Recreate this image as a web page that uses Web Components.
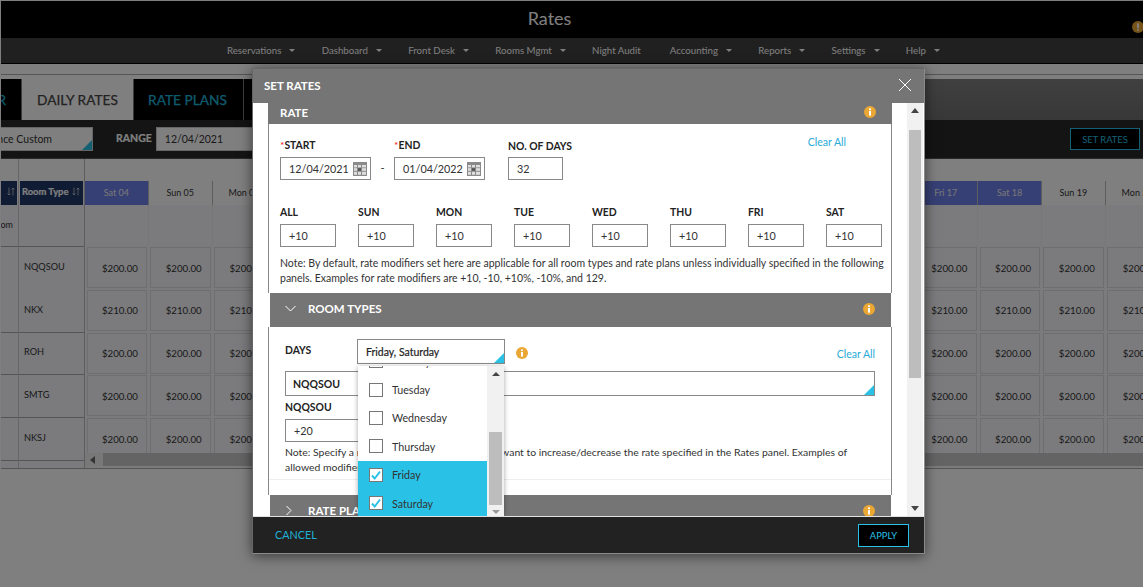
<!DOCTYPE html>
<html><head><meta charset="utf-8">
<style>
html,body{margin:0;padding:0;height:100%;overflow:hidden;background:#fff;font-family:Lato,"Open Sans",sans-serif}
</style></head><body>
<rates-page>
  <app-header slot="top">Rates</app-header>
  <main-nav slot="top"></main-nav>
  <rate-tabs slot="top"></rate-tabs>
  <rate-toolbar slot="top"></rate-toolbar>
  <rate-grid slot="top"></rate-grid>
  <set-rates-modal slot="modal">
    <panel-head>RATE</panel-head>
    <rate-panel></rate-panel>
    <panel-head chevron="down" tall>ROOM TYPES</panel-head>
    <room-panel></room-panel>
    <panel-head chevron="right" tall>RATE PLANS</panel-head>
  </set-rates-modal>
</rates-page>
<script>
const def=(name,html,init)=>customElements.define(name,class extends HTMLElement{
  constructor(){super();const r=this.attachShadow({mode:'open'});r.innerHTML=typeof html==='function'?html(this):html;}
  connectedCallback(){ if(init) init(this); }
});
const FONT='font-family:Lato,"Open Sans",sans-serif;';

def('info-icon',`<style>:host{display:inline-flex;width:12px;height:12px}svg{display:block}</style>
<svg width="12" height="12" viewBox="0 0 12 12"><circle cx="6" cy="6" r="6" fill="#eaa733"/><rect x="5" y="5" width="2" height="4.6" fill="#fff"/><rect x="5" y="2.4" width="2" height="1.7" fill="#fff"/></svg>`);

def('cal-icon',`<style>:host{display:inline-flex;width:14px;height:14px}svg{display:block}</style>
<svg width="14" height="14" viewBox="0 0 14 14"><rect width="14" height="14" fill="#8a8a8a"/><g fill="#dedede"><rect x="1" y="3" width="3" height="2.4"/><rect x="5" y="3" width="3" height="2.4"/><rect x="9" y="3" width="4" height="2.4"/><rect x="1" y="6.2" width="3" height="2.6"/><rect x="9" y="6.2" width="4" height="2.6"/><rect x="1" y="9.8" width="3" height="3"/><rect x="5" y="9.8" width="3" height="3"/><rect x="9" y="9.8" width="4" height="3"/></g><rect x="5" y="6.2" width="3" height="2.6" fill="#555"/></svg>`);

def('rates-page',`<style>
:host{display:block;position:relative;width:1143px;height:587px;overflow:hidden;background:#fff;${FONT}}
.page{padding:1px 0 0 1px;height:586px;box-sizing:border-box;overflow:hidden;background:#fff}
.dim{position:absolute;inset:0;background:rgba(0,0,0,.5)}
</style><div class="page"><slot name="top"></slot></div><div class="dim"></div><slot name="modal"></slot>`);

def('app-header',`<style>
:host{display:flex;position:relative;height:37px;background:#000;color:#fff;align-items:center;justify-content:center;padding:0 45px 3px 0;box-sizing:border-box;font-size:18px}
.w{position:absolute;right:-1px;top:20px;transform:rotate(180deg)}
</style><slot></slot><info-icon class="w"></info-icon>`);

def('main-nav',h=>{
 const items=[['Reservations',1],['Dashboard',1],['Front Desk',1],['Rooms Mgmt',1],['Night Audit',0],['Accounting',1],['Reports',1],['Settings',1],['Help',1]];
 return `<style>
:host{display:flex;height:26px;background:#404040;border-bottom:1px solid #000;box-sizing:border-box;align-items:center;padding:0 0 2px 226px;color:#fff;font-size:9.7px}
span{display:flex;align-items:center;margin-right:26.3px}
span.n{margin-right:29px}
i{display:block;margin-left:8px;margin-top:1px;border:3px solid transparent;border-top:3px solid #fff;border-bottom:0;width:0;height:0;border-left-width:3.5px;border-right-width:3.5px}
</style>`+items.map(([t,c])=>`<span class="${c?'':'n'}">${t}${c?'<i></i>':''}</span>`).join('');
});

def('rate-tabs',`<style>
:host{display:block;padding-top:10px}
.line{height:4px;border-top:1px solid #aaa;background:#fff}
.row{display:flex;height:41px;background:linear-gradient(#808080,#707070);font-size:13.7px}
.t{display:flex;align-items:center;justify-content:center;background:#000;color:#1fb6dc;box-sizing:border-box;margin-right:1px;padding-bottom:1px;white-space:nowrap;overflow:hidden;-webkit-text-stroke:.25px currentColor}
.a{width:20px;justify-content:flex-end;padding-right:15px}
.on{width:111px;background:#fff;color:#444}
.b{width:109px;padding-right:2px}.c{width:60px}
</style><div class="line"></div><div class="row"><div class="t a">R</div><div class="t on">DAILY RATES</div><div class="t b">RATE PLANS</div><div class="t c"></div></div>`);

def('rate-toolbar',`<style>
:host{display:flex;height:39px;background:#282828;border-bottom:1px solid #555;box-sizing:border-box;align-items:center;color:#fff;font-size:11px}
.sel{position:relative;width:92px;height:24px;background:#fff;border:1px solid #ccc;border-left:0;box-sizing:border-box;display:flex;align-items:center;justify-content:flex-end;padding-right:40px;color:#333;white-space:nowrap;overflow:hidden;font-size:10.5px}
.sel:after{content:"";position:absolute;right:0;bottom:0;border:5.5px solid #29c2e6;border-top-color:transparent;border-left-color:transparent}
b{margin-left:23px;font-size:10.5px;color:#fff;padding-bottom:2px;-webkit-text-stroke:.2px #fff}
.in{margin-left:4px;width:120px;height:24px;background:#fff;border:1px solid #ccc;box-sizing:border-box;color:#333;display:flex;align-items:center;padding-left:8px;font-size:10.5px}
.btn{margin-left:auto;margin-right:3px;width:70px;height:22px;background:#000;border:1px solid #29c2e6;color:#29c2e6;display:flex;align-items:center;justify-content:center;font-size:9.4px;box-sizing:border-box}
</style><div class="sel">Advance Custom</div><b>RANGE</b><div class="in">12/04/2021</div><div class="btn">SET RATES</div>`);

def('rate-grid',h=>{
 const names=['Sat','Sun','Mon','Tue','Wed','Thu','Fri'];
 let heads='';
 for(let i=0;i<17;i++){const d=4+i;const n=names[i%7];const dd=String(d).padStart(2,'0');
   heads+=`<div class="h ${n==='Sat'||n==='Fri'?'wk':''}">${n} ${dd}</div>`;}
 const rooms=[['NQQSOU','$200.00'],['NKX','$210.00'],['ROH','$200.00'],['SMTG','$200.00'],['NKSJ','$200.00']];
 let rows='';
 rooms.forEach(([n,v])=>{let c='';for(let i=0;i<17;i++)c+=`<div class="c">${v}</div>`;rows+=`<div class="r">${c}</div>`;});
 const blanks='<div class="b"></div>'.repeat(17);
 const rt=rooms.map(([n],i)=>`<div class="rt ${i===0?'nob':''}">${n}</div>`).join('');
 const rt0=rooms.map((_,i)=>`<div class="rt ${i===0?'nob':''}"></div>`).join('');
 const arrows='<svg width="8" height="9" viewBox="0 0 8 9"><path d="M2 0.5V8M0.5 6.5L2 8L3.5 6.5M6 8.5V1M4.5 2.5L6 1L7.5 2.5" stroke="#ccc" fill="none" stroke-width=".8"/></svg>';
 return `<style>
:host{display:flex;height:310px;background:#f6f6fa;border-bottom:1px solid #aaa;box-sizing:border-box;font-size:9px;color:#333}
.c0{width:17px;flex:none;border-right:1px solid #ccc;display:flex;flex-direction:column}
.c1{width:66px;flex:none;border-right:1px solid #bbb;display:flex;flex-direction:column;box-sizing:border-box}
.top{height:22px;flex:none;background:#fff}
.hd{height:24px;flex:none;background:#1e3869;color:#fff;font-weight:700;display:flex;align-items:center;justify-content:space-between;padding:0 3px 3px 2px;box-sizing:border-box;font-size:9.4px;margin:0 1px;white-space:nowrap;-webkit-text-stroke:.2px #fff}
.c0 .hd{margin-left:0;justify-content:flex-end;padding-right:2px}
.blank{height:42px;flex:none;display:flex;align-items:center;justify-content:flex-end;overflow:hidden;white-space:nowrap;border-bottom:1px solid #aaa;box-sizing:border-box;color:#333;padding-right:5px;padding-bottom:2px}
.rt{height:42.8px;flex:none;display:flex;align-items:center;padding-left:5px;box-sizing:border-box;border-bottom:1px solid #aaa;padding-bottom:3px;font-size:9.2px}
.nob{border-bottom:0}
.days{flex:1;min-width:0;overflow:hidden;display:flex;flex-direction:column}
.topr{height:22px;flex:none;background:#fff}
.hr,.br,.r{display:flex;flex:none}
.h{width:63.8px;flex:none;height:24px;background:#fff;display:flex;align-items:center;justify-content:center;border-right:1px solid #bbb;box-sizing:border-box;color:#333;padding-bottom:2px}
.h.wk{background:#6f80ea;color:#eee}
.b{width:63.8px;flex:none;height:42px;border-right:1px solid #eee;box-sizing:border-box}
.rows{height:206px;overflow:hidden;flex:none}
.r{height:42.8px}
.c{width:60.8px;flex:none;margin:0 1.5px;height:41px;border:1px solid #ddd;box-sizing:border-box;display:flex;align-items:center;justify-content:center;padding-left:6px;font-size:9.7px}
.bar{height:13px;flex:none;background:#f1f1f1;display:flex;align-items:center;padding-left:5px}
.bar i{border:4px solid transparent;border-right:5px solid #666;border-left:0;margin-right:8px}
.bar u{display:block;flex:1;height:13px;background:#c8c8c8}
</style>
<div class="c0"><div class="top"></div><div class="hd">${arrows}</div><div class="blank">Room</div>${rt0}</div>
<div class="c1"><div class="top"></div><div class="hd">Room Type${arrows}</div><div class="blank"></div>${rt}</div>
<div class="days"><div class="topr"></div><div class="hr">${heads}</div><div class="br">${blanks}</div><div class="rows">${rows}</div><div class="bar"><i></i><u></u></div></div>`;
});

def('set-rates-modal',`<style>
:host{position:absolute;left:252px;top:68px;width:673px;height:486px;box-sizing:border-box;border:1px solid #8a8a8a;border-top-color:#666;border-left-color:#666;background:#757575;display:flex;flex-direction:column;box-shadow:0 2px 12px rgba(0,0,0,.55);${FONT}}
.hd{height:34px;flex:none;display:flex;align-items:center;justify-content:space-between;padding:0 11px 2px 11px;box-sizing:border-box;color:#fff;font-size:11.5px;font-weight:700}
.bd{flex:1;min-height:0;display:flex;background:#fff;overflow:hidden;position:relative}
.sc{flex:1;min-width:0;padding:0 15px 0 15px;overflow:hidden}
.sb{width:16px;flex:none;background:#f1f1f1;display:flex;flex-direction:column;align-items:center;padding-top:5px;box-sizing:border-box;margin-right:1px}
.up{border:4px solid transparent;border-bottom:5px solid #444;border-top:0;width:0}
.th{width:12px;height:248px;background:#bdbdbd;margin-top:17px}
.dn{border:4px solid transparent;border-top:5px solid #444;border-bottom:0;width:0;margin-top:auto;margin-bottom:5px}
.ft{height:37px;flex:none;background:#222;border-top:1px solid #e2e2e2;display:flex;align-items:center;justify-content:space-between;padding:0 15px 2px 22px;box-sizing:border-box;font-size:10.8px}
.can{color:#1fb2d6}
.ap{width:51px;height:23px;margin-top:2px;background:#000;border:1px solid #29c2e6;color:#29c2e6;display:flex;align-items:center;justify-content:center;font-size:9.4px;box-sizing:border-box}
</style>
<div class="hd"><span>SET RATES</span><svg width="16" height="16" viewBox="0 0 16 16"><path d="M2 2 L14 14 M14 2 L2 14" stroke="#fff" stroke-width="1" fill="none"/></svg></div>
<div class="bd"><div class="sc"><slot></slot></div><div class="sb"><i class="up"></i><i class="th"></i><i class="dn"></i></div></div>
<div class="ft"><span class="can">CANCEL</span><span class="ap">APPLY</span></div>`);

def('panel-head',h=>`<style>
:host{display:flex;align-items:center;height:${h.hasAttribute('tall')?'34px':'21px'};background:#757575;color:#fff;font-size:11.5px;font-weight:700;box-sizing:border-box;padding:0 16px 3px ${h.hasAttribute('tall')?'15':'12'}px;${h.hasAttribute('tall')?'margin:0 1px 0 2px;':''}}
svg{margin-right:12px;flex:none}
info-icon{margin-left:auto}
</style>${h.getAttribute('chevron')==='down'?'<svg width="11" height="11" viewBox="0 0 11 11"><path d="M0.5 3 L5.5 8 L10.5 3" stroke="#fff" fill="none"/></svg>':h.getAttribute('chevron')==='right'?'<svg width="11" height="11" viewBox="0 0 11 11"><path d="M1.5 1 L6 5.5 L1.5 10" stroke="#fff" fill="none"/></svg>':''}<slot></slot><info-icon></info-icon>`);

const labelCss=`b{display:block;font-size:10.4px;font-weight:700;color:#222;line-height:12px}b s{color:#f02020;text-decoration:none;font-weight:400}`;
const inputCss=`.in{height:23px;border:1px solid #888;box-sizing:border-box;display:flex;align-items:center;padding-left:8px;font-size:10.8px;color:#333;justify-content:space-between;padding-right:3px;background:#fff}`;

def('rate-panel',`<style>
:host{display:block;height:169px;border:1px solid #888;border-width:0 1px;padding:15px 8px 0 11px;box-sizing:border-box;${FONT}}
${labelCss}${inputCss}
.r1{display:flex;align-items:flex-start}
.f{width:91px}.f b{margin-bottom:6px}
.d{width:23px;text-align:center;padding-top:22px;font-size:11px;color:#333;box-sizing:border-box}
.nd{width:55px;white-space:nowrap}.nd b{margin-top:1px;margin-bottom:5px}
.clr{margin-left:auto;margin-right:37px;color:#29abd6;font-size:10.5px;margin-top:-3px}
.r2{display:grid;grid-template-columns:repeat(8,55.7px);column-gap:22.3px;margin-top:26px}
.r2 b{margin-bottom:6px}
p{margin:9px 0 0;font-size:10.5px;line-height:15px;color:#333;white-space:nowrap}
</style>
<div class="r1">
 <div class="f"><b><s>*</s>START</b><div class="in">12/04/2021<cal-icon></cal-icon></div></div>
 <div class="d">-</div>
 <div class="f"><b><s>*</s>END</b><div class="in">01/04/2022<cal-icon></cal-icon></div></div>
 <div style="width:23px"></div>
 <div class="nd"><b>NO. OF DAYS</b><div class="in">32</div></div>
 <div class="clr">Clear All</div>
</div>
<div class="r2">
${['ALL','SUN','MON','TUE','WED','THU','FRI','SAT'].map(d=>`<div><b>${d}</b><div class="in">+10</div></div>`).join('')}
</div>
<p>Note: By default, rate modifiers set here are applicable for all room types and rate plans unless individually specified in the following<br>panels. Examples for rate modifiers are +10, -10, +10%, -10%, and 129.</p>`);

def('days-select',`<style>
:host{display:block;position:relative;width:148px;${FONT}}
.v{height:25px;border:1px solid #888;box-sizing:border-box;position:relative;display:flex;align-items:center;padding-left:8px;font-size:10.5px;color:#222;background:#fff;-webkit-text-stroke:.2px #222}
.v:after{content:"";position:absolute;right:0;bottom:0;border:5.5px solid #29c2e6;border-top-color:transparent;border-left-color:transparent}
.dd{position:absolute;left:1px;top:27px;width:146px;height:150px;background:#fff;display:flex;box-shadow:0 1px 5px rgba(0,0,0,.35);overflow:hidden;z-index:5}
.ls{width:129px;flex:none;overflow:hidden}
.it{height:28.4px;display:flex;align-items:center;padding-left:11px;font-size:10.7px;color:#333;box-sizing:border-box}
.it:first-child{margin-top:-19px}
.it i{display:block;width:14px;height:14px;border:1px solid #777;box-sizing:border-box;margin-right:9px;background:#fff;flex:none}
.it svg{display:block}
.on{background:#29c2e6}
.sb{flex:1;background:#f1f1f1;display:flex;flex-direction:column;align-items:center;padding-top:6px;box-sizing:border-box}
.up{border:4px solid transparent;border-bottom:4px solid #444;border-top:0;width:0}
.th{width:13px;height:73px;background:#bdbdbd;margin-top:56px}
.dn{border:4px solid transparent;border-top:4px solid #999;border-bottom:0;width:0;margin-top:5px}
</style>
<div class="v">Friday, Saturday</div>
<div class="dd"><div class="ls">
${['Monday','Tuesday','Wednesday','Thursday','Friday','Saturday'].map(d=>{const on=d==='Friday'||d==='Saturday';
 return `<div class="it ${on?'on':''}"><i>${on?'<svg width="12" height="12" viewBox="0 0 12 12"><path d="M2 6.5 L4.7 9.5 L10 2.5" stroke="#29c2e6" stroke-width="2" fill="none"/></svg>':''}</i>${d}</div>`}).join('')}
</div><div class="sb"><i class="up"></i><i class="th"></i><i class="dn"></i></div></div>`);

def('room-panel',`<style>
:host{display:block;height:168px;border:1px solid #888;border-width:0 1px;box-sizing:border-box;${FONT}}
${labelCss}${inputCss}
.in2{padding:12px 16px 0 16px}
.r1{display:flex;align-items:flex-start}
.r1>b{width:72px;margin-top:5px}
info-icon{margin:8px 0 0 11px}
.clr{margin-left:auto;color:#29abd6;font-size:10.5px;margin-top:9px}
.ms{position:relative;margin-top:7px;height:25px;border:1px solid #888;box-sizing:border-box;display:flex;align-items:center;padding-left:7px;font-size:10.5px;font-weight:700;color:#222}
.ms:after{content:"";position:absolute;right:0;bottom:0;border:5.5px solid #29c2e6;border-top-color:transparent;border-left-color:transparent}
.nm{margin-top:5px;margin-bottom:6px}
.in{width:90px}
p{margin:3px 0 0;font-size:10.42px;line-height:15px;color:#333;white-space:nowrap}
.hr{height:1px;background:#eee;margin-top:4px}
</style>
<div class="in2">
<div class="r1"><b>DAYS</b><days-select></days-select><info-icon></info-icon><div class="clr">Clear All</div></div>
<div class="ms">NQQSOU</div>
<b class="nm">NQQSOU</b>
<div class="in">+20</div>
<p>Note: Specify a room type modifier value if you want to increase/decrease the rate specified in the Rates panel. Examples of<br>allowed modifiers are +10, -10, and 129.</p>
</div><div class="hr"></div>`);
</script>
</body></html>
